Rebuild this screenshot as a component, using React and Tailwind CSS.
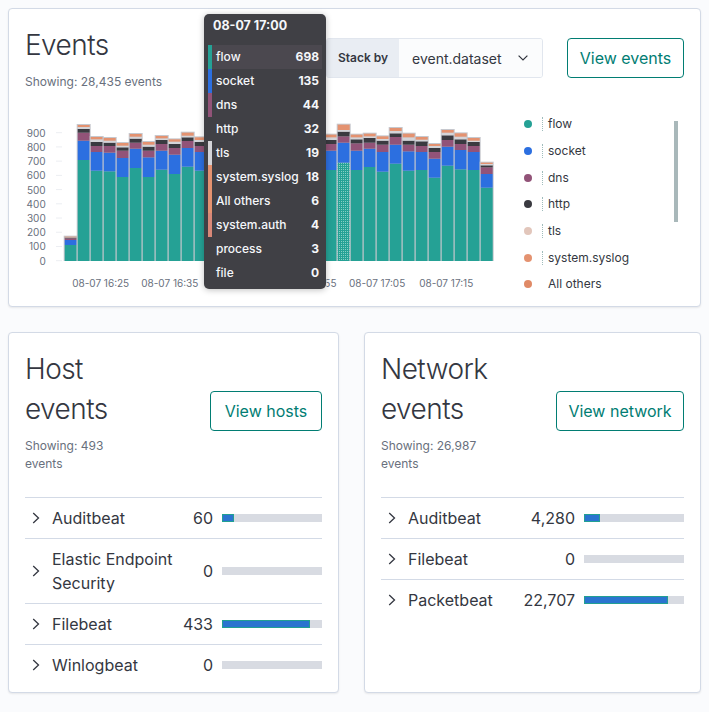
import React from "react";

const C = {
  teal: "#25a195",
  blue: "#2c6fe0",
  purple: "#925378",
  dark: "#3a3a40",
  tls: "#d4d4d8",
  orange: "#e49270",
};

// zoom-space tops: [flowTop, socketTop, dnsTop, httpTop, syslogBottom, syslogTop]
const BARS = [
  [390, 375, 370, 368, 367, 365],
  [135, 77, 53, 42, 36, 30],
  [167, 111, 93, 81, 73, 66],
  [169, 113, 93, 83, 77, 69],
  [186, 129, 107, 97, 92, 84],
  [159, 101, 83, 71, 65, 57],
  [186, 127, 107, 95, 89, 81],
  [164, 107, 87, 75, 70, 63],
  [177, 119, 99, 87, 80, 73],
  [155, 99, 78, 67, 62, 53],
  [167, 111, 93, 81, 75, 67],
  [172, 114, 94, 82, 76, 68],
  [160, 104, 84, 72, 66, 58],
  [178, 120, 100, 88, 82, 74],
  [165, 108, 88, 76, 70, 62],
  [170, 112, 92, 80, 74, 66],
  [158, 100, 80, 68, 62, 54],
  [175, 117, 97, 85, 79, 71],
  [168, 110, 90, 78, 72, 64],
  [162, 104, 84, 72, 66, 58],
  [165, 107, 87, 75, 67, 59],
  [143, 83, 64, 50, 45, 29],
  [165, 107, 85, 73, 67, 59],
  [156, 101, 83, 69, 64, 56],
  [170, 111, 89, 77, 72, 64],
  [146, 89, 66, 55, 48, 39],
  [167, 109, 89, 77, 67, 56],
  [165, 111, 93, 79, 74, 66],
  [188, 131, 111, 99, 93, 87],
  [152, 95, 75, 61, 53, 45],
  [163, 105, 87, 73, 65, 55],
  [165, 111, 93, 81, 77, 69],
  [218, 177, 157, 151, 147, 143],
];

const zy = (z) => 10 + z / 3;
const BASE = 156;
const FONT = "Inter, 'Noto Sans', sans-serif";

function Chart() {
  const yLabels = [900, 800, 700, 600, 500, 400, 300, 200, 100, 0];
  const xLabels = [
    ["08-07 16:25", 75.7],
    ["08-07 16:35", 144.8],
    ["08-07 17:05", 352.1],
    ["08-07 17:15", 421.2],
  ];
  return (
    <svg width="490" height="185" className="block shrink-0">
      <defs>
        <pattern id="hatch" width="2" height="2" patternUnits="userSpaceOnUse">
          <rect width="2" height="2" fill="#25a195" />
          <rect width="1" height="1" fill="#86cfc4" />
        </pattern>
        <clipPath id="tipclip">
          <rect x="301.5" y="160" width="40" height="30" />
        </clipPath>
      </defs>
      {yLabels.map((v, i) => (
        <g key={v}>
          <text
            x="20.7"
            y={27.7 + 14.22 * i}
            textAnchor="end"
            dominantBaseline="central"
            fontSize="10"
            fill="#69707d"
            fontFamily={FONT}
          >
            {v}
          </text>
          <line x1="31" x2="37" y1={27.7 + 14.22 * i} y2={27.7 + 14.22 * i} stroke="#eceef2" strokeWidth="1" />
        </g>
      ))}
      {BARS.map((b, k) => {
        const x = 38.7 + 13 * k;
        const [t, s, p, d, ob, ot] = b.map(zy);
        const hl = k === 21;
        return (
          <g key={k}>
            <rect x={x} y={ot - 1} width="14" height={BASE - ot + 1} fill="#c6c8ce" />
            <rect x={x + 1} y={t} width="12" height={BASE - t} fill={hl ? "url(#hatch)" : C.teal} />
            <rect x={x + 1} y={s} width="12" height={t - s} fill={C.blue} />
            <rect x={x + 1} y={p} width="12" height={s - p} fill={C.purple} />
            <rect x={x + 1} y={d} width="12" height={p - d} fill={C.dark} />
            <rect x={x + 1} y={ob} width="12" height={d - ob} fill={C.tls} />
            <rect x={x + 1} y={ot} width="12" height={ob - ot} fill={C.orange} />
          </g>
        );
      })}
      {xLabels.map(([l, x]) => (
        <text
          key={l}
          x={x}
          y="178"
          textAnchor="middle"
          dominantBaseline="central"
          fontSize="10"
          fill="#69707d"
          fontFamily={FONT}
        >
          {l}
        </text>
      ))}
      <g clipPath="url(#tipclip)">
        <text
          x="283"
          y="178"
          textAnchor="middle"
          dominantBaseline="central"
          fontSize="10"
          fill="#69707d"
          fontFamily={FONT}
        >
          08-07 16:55
        </text>
      </g>
    </svg>
  );
}

const LEGEND = [
  ["flow", C.teal, true],
  ["socket", C.blue, true],
  ["dns", C.purple, true],
  ["http", C.dark, true],
  ["tls", "#e2c6bb", true],
  ["system.syslog", C.orange, true],
  ["All others", "#e08a66", false],
];

function Legend() {
  return (
    <div className="flex flex-1 pl-[9px] pt-[6px]">
      <ul className="flex-1">
        {LEGEND.map(([name, color, line]) => (
          <li key={name} className="flex h-[26.67px] items-center">
            <span className="h-2 w-2 shrink-0 rounded-full" style={{ backgroundColor: color }} />
            <span
              className={
                line
                  ? "ml-[10px] h-[14px] border-l border-dotted border-[#9fbcbc]"
                  : "ml-[10px] h-[14px] w-px"
              }
            />
            <span className="ml-[5px] text-[12px] text-[#343741]">{name}</span>
          </li>
        ))}
      </ul>
      <div className="mr-[6px] mt-[10px] h-[101px] w-[4px] bg-[#a9b8ba]" />
    </div>
  );
}

const TIP = [
  ["flow", "698", C.teal],
  ["socket", "135", C.blue],
  ["dns", "44", C.purple],
  ["http", "32", null],
  ["tls", "19", "#d4d4d8"],
  ["system.syslog", "18", C.orange],
  ["All others", "6", C.orange],
  ["system.auth", "4", "#d98878"],
  ["process", "3", null],
  ["file", "0", null],
];

function Tooltip() {
  return (
    <div className="absolute left-[204px] top-[14px] w-[122px] rounded-[5px] bg-[#404045] px-[4px] pb-[4px] text-[12px] text-[#f5f7fa] shadow-[0_1px_6px_rgba(0,0,0,0.25)]">
      <div className="flex h-[24px] items-center pl-[5px] text-[12.5px] font-bold">08-07 17:00</div>
      <div className="mt-[7px]">
        {TIP.map(([n, v, c], i) => (
          <div key={n} className="flex h-[24px]">
            <div className="w-[4px]" style={{ backgroundColor: c || "transparent" }} />
            <div
              className={
                "flex flex-1 items-center justify-between pl-[4px] pr-[3px] " +
                (i === 0 ? "bg-[#4b484f]" : "")
              }
            >
              <span className="font-medium">{n}</span>
              <span className="font-bold">{v}</span>
            </div>
          </div>
        ))}
      </div>
    </div>
  );
}

function SelectChevron() {
  return (
    <svg width="10" height="6" viewBox="0 0 10 6" className="shrink-0">
      <polyline points="0.6,0.6 5,5 9.4,0.6" fill="none" stroke="#343741" strokeWidth="1.2" />
    </svg>
  );
}

function RowChevron() {
  return (
    <svg width="8" height="12" viewBox="0 0 8 12" className="block">
      <polyline points="1.2,1 6.5,6 1.2,11" fill="none" stroke="#343741" strokeWidth="1.3" />
    </svg>
  );
}

function StatRows({ rows }) {
  return (
    <div className="mt-6 border-t border-[#d3dae6]">
      {rows.map(([name, value, fill]) => (
        <div key={name} className="flex items-center border-b border-[#d3dae6] py-2 last:border-b-0">
          <div className="w-[27px] shrink-0 pl-[7px]">
            <RowChevron />
          </div>
          <div className="flex-1 text-[16px] leading-6 text-[#343741]">{name}</div>
          <div className="text-[16px] leading-6 text-[#343741]">{value}</div>
          <div className="ml-[9px] h-2 w-[100px] shrink-0 bg-[#d8dbe2]">
            {fill > 0 && (
              <div
                className="h-full border border-[#22a093] bg-[#2b74cf]"
                style={{ width: fill + "px" }}
              />
            )}
          </div>
        </div>
      ))}
    </div>
  );
}

function StatPanel({ title1, title2, showing1, titleW, button, buttonW, rows, pb }) {
  return (
    <div className={"rounded-[4px] border border-[#d3dae6] bg-white px-4 pt-4 shadow-[0_1px_2px_rgba(0,0,0,0.08)] " + pb}>
      <div className="flex items-center justify-between">
        <div className={titleW}>
          <h2 className="text-[28px] font-light leading-[40px] tracking-[-0.02em] text-[#343741]">
            {title1} {title2}
          </h2>
          <p className="mt-2 text-[12px] leading-[18px] text-[#69707d]">{showing1}</p>
        </div>
        <button
          className={
            "flex h-10 items-center justify-center rounded-[4px] border border-[#017d73] text-[16px] text-[#017d73] " +
            buttonW
          }
        >
          {button}
        </button>
      </div>
      <StatRows rows={rows} />
    </div>
  );
}

export default function App() {
  return (
    <div className="relative min-h-[712px] bg-[#fafbfd] p-2" style={{ fontFamily: FONT }}>
      <div className="rounded-[4px] border border-[#d3dae6] bg-white p-4 shadow-[0_1px_2px_rgba(0,0,0,0.08)]">
        <div className="flex items-center justify-between">
          <div>
            <h2 className="text-[28px] font-light leading-[40px] tracking-[-0.02em] text-[#343741]">Events</h2>
            <p className="mt-2 text-[12px] leading-[18px] text-[#69707d]">Showing: 28,435 events</p>
          </div>
          <div className="flex items-center gap-6">
            <div className="flex h-10 w-[217px] overflow-hidden rounded-[3px] border border-[#e1e6ee]">
              <div className="flex w-[72px] shrink-0 items-center whitespace-nowrap bg-[#e9edf3] pl-[11px] text-[12px] font-semibold text-[#343741]">
                Stack by
              </div>
              <div className="flex flex-1 items-center justify-between bg-[#fbfcfd] pl-[13px] pr-[14px] text-[14px] text-[#343741]">
                <span>event.dataset</span>
                <SelectChevron />
              </div>
            </div>
            <button className="flex h-10 w-[117px] items-center justify-center rounded-[4px] border border-[#017d73] text-[16px] text-[#017d73]">
              View events
            </button>
          </div>
        </div>
        <div className="mt-[14px] flex h-[185px]">
          <Chart />
          <Legend />
        </div>
      </div>

      <div className="mt-[25px] grid grid-cols-[331px_337px] gap-[25px]">
        <StatPanel
          title1="Host"
          title2="events"
          showing1="Showing: 493 events"
          titleW="w-[100px]"
          button="View hosts"
          buttonW="w-[112px]"
          pb="pb-[7px]"
          rows={[
            ["Auditbeat", "60", 12],
            ["Elastic Endpoint Security", "0", 0],
            ["Filebeat", "433", 88],
            ["Winlogbeat", "0", 0],
          ]}
        />
        <StatPanel
          title1="Network"
          title2="events"
          showing1="Showing: 26,987 events"
          titleW="w-[112px]"
          button="View network"
          buttonW="w-[128px]"
          pb="pb-[7px]"
          rows={[
            ["Auditbeat", "4,280", 16],
            ["Filebeat", "0", 0],
            ["Packetbeat", "22,707", 84],
          ]}
        />
      </div>

      <Tooltip />
    </div>
  );
}
